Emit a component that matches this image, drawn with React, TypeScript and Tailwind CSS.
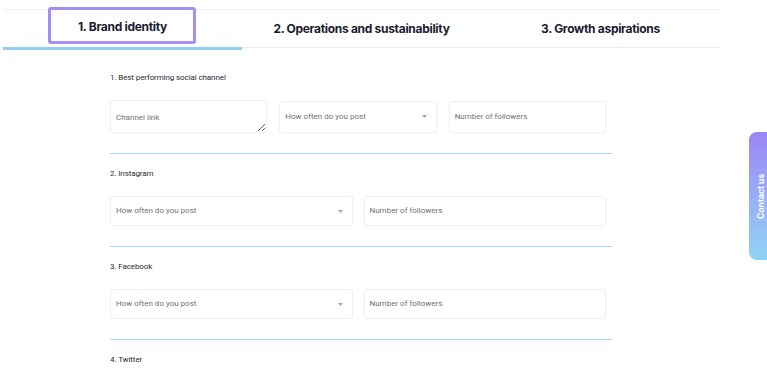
import React from "react";

const tabs = ["1. Brand identity", "2. Operations and sustainability", "3. Growth aspirations"];

function Caret() {
  return (
    <svg width="5" height="3" viewBox="0 0 5 3" className="shrink-0">
      <path d="M0 0h5L2.5 3z" fill="#a3a3a3" />
    </svg>
  );
}

function FakeSelect({ tall }: { tall?: boolean }) {
  return (
    <div className={(tall ? "h-[32px]" : "h-[30px]") + " flex items-center justify-between pl-[5px] pr-[9px] rounded-[3px] border border-[#f0f0f0] bg-white shadow-[0_0_2px_rgba(0,0,0,0.03)]"}>
      <span className="text-[8px] text-[#707070]">How often do you post</span>
      <Caret />
    </div>
  );
}

function FakeInput({ text, tall }: { text: string; tall?: boolean }) {
  return (
    <div className={(tall ? "h-[32px]" : "h-[30px]") + " flex items-center px-[5px] rounded-[3px] border border-[#f0f0f0] bg-white shadow-[0_0_2px_rgba(0,0,0,0.03)]"}>
      <span className="text-[8px] text-[#707070]">{text}</span>
    </div>
  );
}

function Section({ label, first, children }: { label: string; first?: boolean; children: React.ReactNode }) {
  return (
    <div className={first ? "pt-[23px] pb-[20px] border-b-[1.5px] border-[#a8dcf6]" : "pt-[15px] pb-[20px] border-b-[1.5px] border-[#a8dcf6]"}>
      <div className="text-[8px] leading-[10px] text-[#2b2b33] tracking-[-0.1px]">{label}</div>
      <div className="w-[496px] mt-[17px]">{children}</div>
    </div>
  );
}

export default function App() {
  return (
    <div className="w-[767px] h-[382px] relative bg-white overflow-hidden font-['Roboto',sans-serif]">
      <div className="pt-[9px] pl-[3px] w-[720px]">
        <div className="grid grid-cols-3 items-start border-t border-[#f1f1f3]">
          {tabs.map((t, i) => (
            <div
              key={t}
              className={
                i === 0
                  ? "relative h-[40px] flex items-center justify-center border-b-[3px] border-[#8fd0f0]"
                  : "relative h-[38px] flex items-center justify-center border-b border-[#ececee]"
              }
            >
              {i === 0 && (
                <div className="absolute left-[45px] top-[-3px] w-[148px] h-[37px] border-[3px] border-[#a68cf6] rounded-[3px]" />
              )}
              <span className={i === 0 ? "-mt-[3px] font-['Inter',sans-serif] font-bold text-[12px] tracking-[-0.3px] text-[#1b1a2e]" : "font-['Inter',sans-serif] font-bold text-[12px] tracking-[-0.3px] text-[#1b1a2e]"}>
                {t}
              </span>
            </div>
          ))}
        </div>
      </div>

      <div className="ml-[110px] w-[502px]">
        <Section label="1. Best performing social channel" first>
          <div className="grid grid-cols-3 gap-[12px] items-center">
            <textarea
              placeholder="Channel link"
              className="h-[33px] rounded-[3px] border border-[#f0f0f0] px-[5px] pt-[12px] text-[8px] leading-[10px] placeholder:text-[#707070] outline-none shadow-[0_0_2px_rgba(0,0,0,0.03)]"
            />
            <FakeSelect tall />
            <FakeInput text="Number of followers" tall />
          </div>
        </Section>
        <Section label="2. Instagram">
          <div className="grid grid-cols-2 gap-[11px]">
            <FakeSelect />
            <FakeInput text="Number of followers" />
          </div>
        </Section>
        <Section label="3. Facebook">
          <div className="grid grid-cols-2 gap-[11px]">
            <FakeSelect />
            <FakeInput text="Number of followers" />
          </div>
        </Section>
        <div className="pt-[15px]">
          <div className="text-[8px] leading-[10px] text-[#2b2b33] tracking-[-0.1px]">4. Twitter</div>
        </div>
      </div>

      <div className="absolute right-[-8px] top-[132px] w-[26px] h-[128px] rounded-l-[8px] bg-gradient-to-b from-[#9c84f6] to-[#8dd4f4] flex items-center justify-center">
        <span className="-rotate-90 whitespace-nowrap text-white font-['Inter',sans-serif] font-bold text-[8.5px]">Contact us</span>
      </div>
    </div>
  );
}
